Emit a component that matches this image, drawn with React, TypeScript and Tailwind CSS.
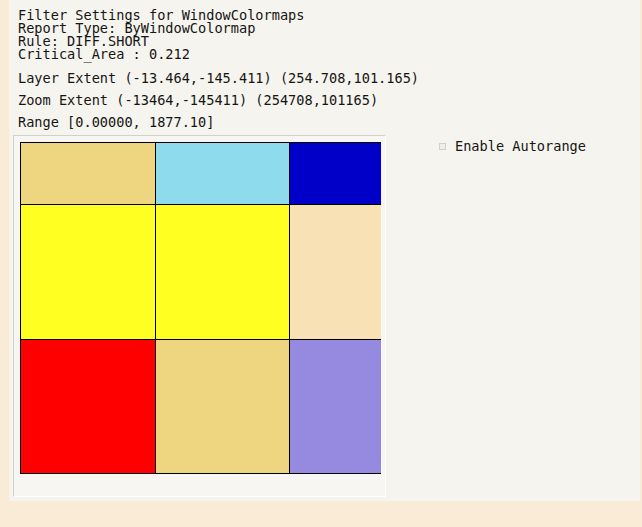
import React from 'react';

const mono = { fontFamily: '"DejaVu Sans Mono", "Liberation Mono", monospace' };

// visible part of the colormap, row by row
const cells: { color: string; w: string; h: string; right: boolean }[][] = [
    [
        { color: 'bg-[#EED681]', w: 'w-[135px]', h: 'h-[62px]', right: true },
        { color: 'bg-[#8FDBEE]', w: 'w-[134px]', h: 'h-[62px]', right: true },
        { color: 'bg-[#0000C8]', w: 'w-[135px]', h: 'h-[62px]', right: false },
    ],
    [
        { color: 'bg-[#FFFF22]', w: 'w-[135px]', h: 'h-[135px]', right: true },
        { color: 'bg-[#FFFF22]', w: 'w-[134px]', h: 'h-[135px]', right: true },
        { color: 'bg-[#F7E1B5]', w: 'w-[135px]', h: 'h-[135px]', right: false },
    ],
    [
        { color: 'bg-[#FF0000]', w: 'w-[135px]', h: 'h-[134px]', right: true },
        { color: 'bg-[#EED681]', w: 'w-[134px]', h: 'h-[134px]', right: true },
        { color: 'bg-[#968AE0]', w: 'w-[135px]', h: 'h-[134px]', right: false },
    ],
];

export default function App() {
    return (
        <div className="w-[642px] h-[527px] bg-[#FAEBD7] overflow-hidden">
            <div className="ml-[9px] w-[631px] h-[501px] bg-[#F5F4EE] flex flex-col">
                {/* Header text */}
                <div className="pl-[9px] pt-[9px] text-[13.6px] text-[#151515] leading-[13px]" style={mono}>
                    <div>Filter Settings for WindowColormaps</div>
                    <div>Report Type: ByWindowColormap</div>
                    <div>Rule: DIFF.SHORT</div>
                    <div>Critical_Area : 0.212</div>
                    <div className="mt-[6px] leading-[22px]">Layer Extent (-13.464,-145.411) (254.708,101.165)</div>
                    <div className="leading-[22px]">Zoom Extent (-13464,-145411) (254708,101165)</div>
                    <div className="leading-[22px]">Range [0.00000, 1877.10]</div>
                </div>

                <div className="flex mt-[2px]">
                    {/* Canvas frame */}
                    <div className="ml-[4px] w-[373px] h-[362px] border-t border-l border-[#D2D1CA] border-b-white border-r-white border-b border-r bg-[#F7F6F2] pl-[6px] pt-[6px]">
                        <div className="w-[361px] h-[332px] overflow-hidden border-t border-l border-black bg-white">
                            <div className="flex flex-col w-[404px]">
                                {cells.map((row, i) => (
                                    <div key={i} className="flex">
                                        {row.map((c, j) => (
                                            <div
                                                key={j}
                                                className={`${c.color} ${c.w} ${c.h} border-b border-black ${c.right ? 'border-r' : ''}`}
                                            />
                                        ))}
                                    </div>
                                ))}
                            </div>
                        </div>
                    </div>

                    {/* Autorange option */}
                    <div className="ml-[53px] mt-[3px] flex items-center gap-[9px] h-[17px]">
                        <div className="w-[7px] h-[7px] border border-[#D0D0CC] bg-[#EFEEEA]" />
                        <span className="text-[13.6px] text-[#151515]" style={mono}>Enable Autorange</span>
                    </div>
                </div>
            </div>
        </div>
    );
}
